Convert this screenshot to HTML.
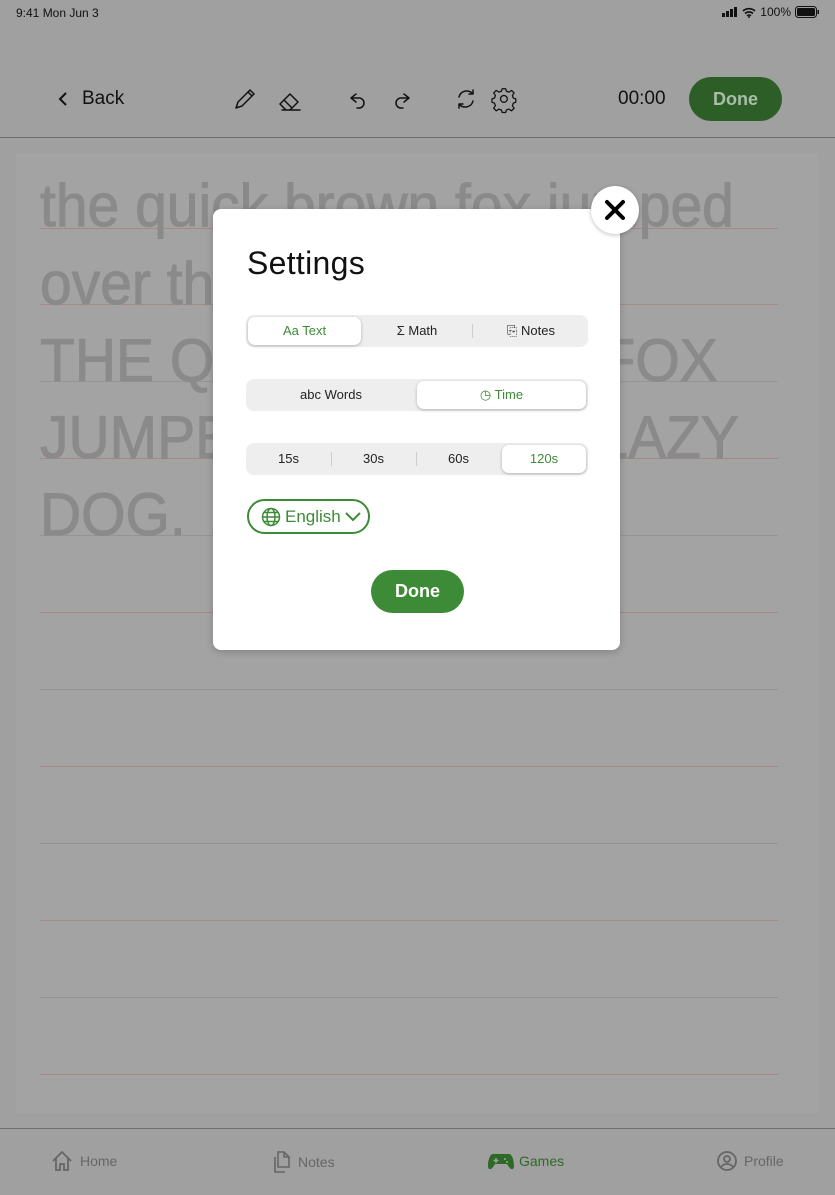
<!DOCTYPE html>
<html><head><meta charset="utf-8"><style>
*{margin:0;padding:0;box-sizing:border-box}
body{width:835px;height:1195px;background:#a0a0a0;font-family:"Liberation Sans",sans-serif;position:relative;overflow:hidden}
.abs{position:absolute}
.status{top:6px;left:16px;font-size:12px;color:#111}
.hline{left:0;width:835px;height:1px;background:#6e6e6e}
.paper{left:16px;top:153px;width:802px;height:960px;background:#a3a3a3}
.rl{left:40px;width:738px;height:1px;background:#a88886}
.big{left:40px;font-size:60px;color:#8a8a8a;line-height:1;transform:scaleX(0.95);transform-origin:0 0;white-space:nowrap;-webkit-text-stroke:1px #8a8a8a}
.modal{left:213px;top:209px;width:407px;height:441px;background:#fff;border-radius:8px;box-shadow:0 2px 8px rgba(0,0,0,.2)}
.seg{left:33px;width:342px;height:32px;background:#eeeeee;border-radius:8px;font-size:13px;color:#222}
.seg .it{position:absolute;top:0;height:32px;line-height:32px;text-align:center}
.seg .on{background:#fff;border-radius:7px;top:2px;height:28px;line-height:28px;box-shadow:0 1px 3px rgba(0,0,0,.25);color:#3d8b37}
.sep{position:absolute;top:9px;width:1px;height:14px;background:#ccc}
.g{color:#3d8b37}
</style></head><body>
<div class="abs status">9:41 Mon Jun 3</div>
<div class="abs" style="top:5px;right:16px;font-size:12px;color:#111;display:flex;align-items:center;gap:4px">
<svg width="16" height="10"><rect x="0" y="6" width="3" height="4" fill="#111"/><rect x="4" y="4" width="3" height="6" fill="#111"/><rect x="8" y="2" width="3" height="8" fill="#111"/><rect x="12" y="0" width="3" height="10" fill="#111"/></svg>
<svg width="14" height="11" viewBox="0 0 14 11"><path d="M1 4a9 9 0 0 1 12 0M3 6.5a6 6 0 0 1 8 0M5 8.8a3 3 0 0 1 4 0" stroke="#111" stroke-width="1.6" fill="none"/><circle cx="7" cy="10" r="1" fill="#111"/></svg>
<span>100%</span>
<svg width="24" height="12"><rect x="0.5" y="0.5" width="21" height="11" rx="3" stroke="#111" fill="none"/><rect x="2" y="2" width="18" height="8" rx="1.5" fill="#111"/><rect x="22.5" y="4" width="1.5" height="4" fill="#111"/></svg>
</div>
<div class="abs" style="left:58px;top:88px;font-size:19px;color:#111;display:flex;align-items:center;gap:14px">
<svg width="10" height="16"><path d="M8 2L2 8l6 6" stroke="#111" stroke-width="2" fill="none"/></svg>Back</div>
<svg class="abs" style="left:232px;top:86px" width="300" height="28" viewBox="0 0 300 28" fill="none" stroke="#111" stroke-width="1.5" stroke-linecap="round" stroke-linejoin="round">
<path d="M4 22l2-6 12-12 4 4-12 12z M16 6l4 4"/>
<path d="M50 24h18 M48 18l10-10 8 8-8 8h-4z M52 14l8 8"/>
<path d="M124 8l-5 4 5 4 M119 12h8a5 5 0 0 1 0 10h-2"/>
<path d="M172 8l5 4-5 4 M177 12h-8a5 5 0 0 0 0 10h2"/>
<path d="M241 8a8 8 0 0 0-14 3 M227 18a8 8 0 0 0 14-3 M241 4v4h-4 M227 22v-4h4"/>
<g transform="translate(260 1) scale(0.85)"><path d="M12 2h4l1 3 3 1 3-2 3 3-2 3 1 3 3 1v4l-3 1-1 3 2 3-3 3-3-2-3 1-1 3h-4l-1-3-3-1-3 2-3-3 2-3-1-3-3-1v-4l3-1 1-3-2-3 3-3 3 2 3-1z"/><circle cx="14" cy="14" r="4"/></g>
</svg>
<div class="abs" style="left:618px;top:88px;font-size:19px;color:#111">00:00</div>
<div class="abs" style="left:689px;top:77px;width:93px;height:44px;border-radius:22px;background:#2d5e28;color:#a9bea6;font-size:18px;font-weight:bold;text-align:center;line-height:44px">Done</div>
<div class="abs hline" style="top:137px"></div>
<div class="abs paper"></div>
<div class="abs rl" style="top:228px"></div><div class="abs rl" style="top:304px"></div><div class="abs rl" style="top:381px;background:#9a9393"></div><div class="abs rl" style="top:458px"></div><div class="abs rl" style="top:535px;background:#979393"></div><div class="abs rl" style="top:612px"></div><div class="abs rl" style="top:689px;background:#929292"></div><div class="abs rl" style="top:766px"></div><div class="abs rl" style="top:843px;background:#929292"></div><div class="abs rl" style="top:920px"></div><div class="abs rl" style="top:997px;background:#929292"></div><div class="abs rl" style="top:1074px"></div>
<div class="abs big" style="top:176px">the quick brown fox jumped</div>
<div class="abs big" style="top:254px">over the lazy dog.</div>
<div class="abs big" style="top:331px">THE QUICK BROWN FOX</div>
<div class="abs big" style="top:408px">JUMPED OVER THE LAZY</div>
<div class="abs big" style="top:485px">DOG.</div>
<div class="abs hline" style="top:1128px"></div>
<div class="abs" style="top:1150px;left:50px;font-size:14px;color:#666;display:flex;align-items:center;gap:6px"><svg width="24" height="22" fill="none" stroke="#666" stroke-width="1.8"><path d="M3 11L12 2l9 9M6 8v12h4v-6h4v6h4V8"/></svg>Home</div>
<div class="abs" style="top:1150px;left:272px;font-size:14px;color:#666;display:flex;align-items:center;gap:6px"><svg width="20" height="24" fill="none" stroke="#666" stroke-width="1.6"><path d="M6 2h6l5 5v10H6zM12 2v5h5M3 7v15h10"/></svg>Notes</div>
<div class="abs" style="top:1150px;left:487px;font-size:14px;color:#2d6a28;display:flex;align-items:center;gap:4px"><svg width="28" height="22"><path d="M6 4h16c3 0 5 6 5 12 0 4-3 4-5 1l-2-3H8l-2 3c-2 3-5 3-5-1C1 10 3 4 6 4z" fill="#2d6a28"/><path d="M9 8v5M6.5 10.5h5" stroke="#a0a0a0" stroke-width="1.5"/><circle cx="18" cy="9" r="1" fill="#a0a0a0"/><circle cx="20" cy="12" r="1" fill="#a0a0a0"/></svg>Games</div>
<div class="abs" style="top:1150px;left:716px;font-size:14px;color:#666;display:flex;align-items:center;gap:6px"><svg width="22" height="22" fill="none" stroke="#666" stroke-width="1.8"><circle cx="11" cy="11" r="9"/><circle cx="11" cy="9" r="3"/><path d="M5 17c3-4 9-4 12 0"/></svg>Profile</div>
<div class="abs modal">
<div class="abs" style="left:34px;top:36px;font-size:32px;color:#111;letter-spacing:0.3px">Settings</div>
<div class="abs seg" style="top:106px">
<div class="it on" style="left:2px;width:113px">Aa Text</div>
<div class="it" style="left:114px;width:114px">Σ Math</div>
<div class="sep" style="left:226px"></div>
<div class="it" style="left:228px;width:114px">⎘ Notes</div>
</div>
<div class="abs seg" style="top:170px">
<div class="it" style="left:0;width:170px">abc Words</div>
<div class="it on" style="left:171px;width:169px">◷ Time</div>
</div>
<div class="abs seg" style="top:234px">
<div class="it" style="left:0;width:85px">15s</div><div class="sep" style="left:85px"></div>
<div class="it" style="left:85px;width:85px">30s</div><div class="sep" style="left:170px"></div>
<div class="it" style="left:170px;width:85px">60s</div>
<div class="it on" style="left:256px;width:84px">120s</div>
</div>
<div class="abs g" style="left:34px;top:290px;width:123px;height:35px;border:2px solid #3d8b37;border-radius:18px;font-size:17px;display:flex;align-items:center;padding-left:12px;gap:4px">
<svg width="20" height="20" fill="none" stroke="#3d8b37" stroke-width="1.5"><circle cx="10" cy="10" r="8.5"/><ellipse cx="10" cy="10" rx="4" ry="8.5"/><path d="M1.5 10h17M3 5.5h14M3 14.5h14"/></svg>English
<svg width="16" height="10" fill="none" stroke="#3d8b37" stroke-width="2"><path d="M1 1l7 7 7-7"/></svg></div>
<div class="abs" style="left:158px;top:361px;width:93px;height:43px;border-radius:22px;background:#3d8b37;color:#fff;font-size:18px;font-weight:bold;text-align:center;line-height:43px">Done</div>
</div>
<div class="abs" style="left:591px;top:186px;width:48px;height:48px;border-radius:50%;background:#fff;box-shadow:0 1px 4px rgba(0,0,0,.25)"><svg width="48" height="48"><path d="M16 16l16 16M32 16L16 32" stroke="#000" stroke-width="4" stroke-linecap="round"/></svg></div>
</body></html>
